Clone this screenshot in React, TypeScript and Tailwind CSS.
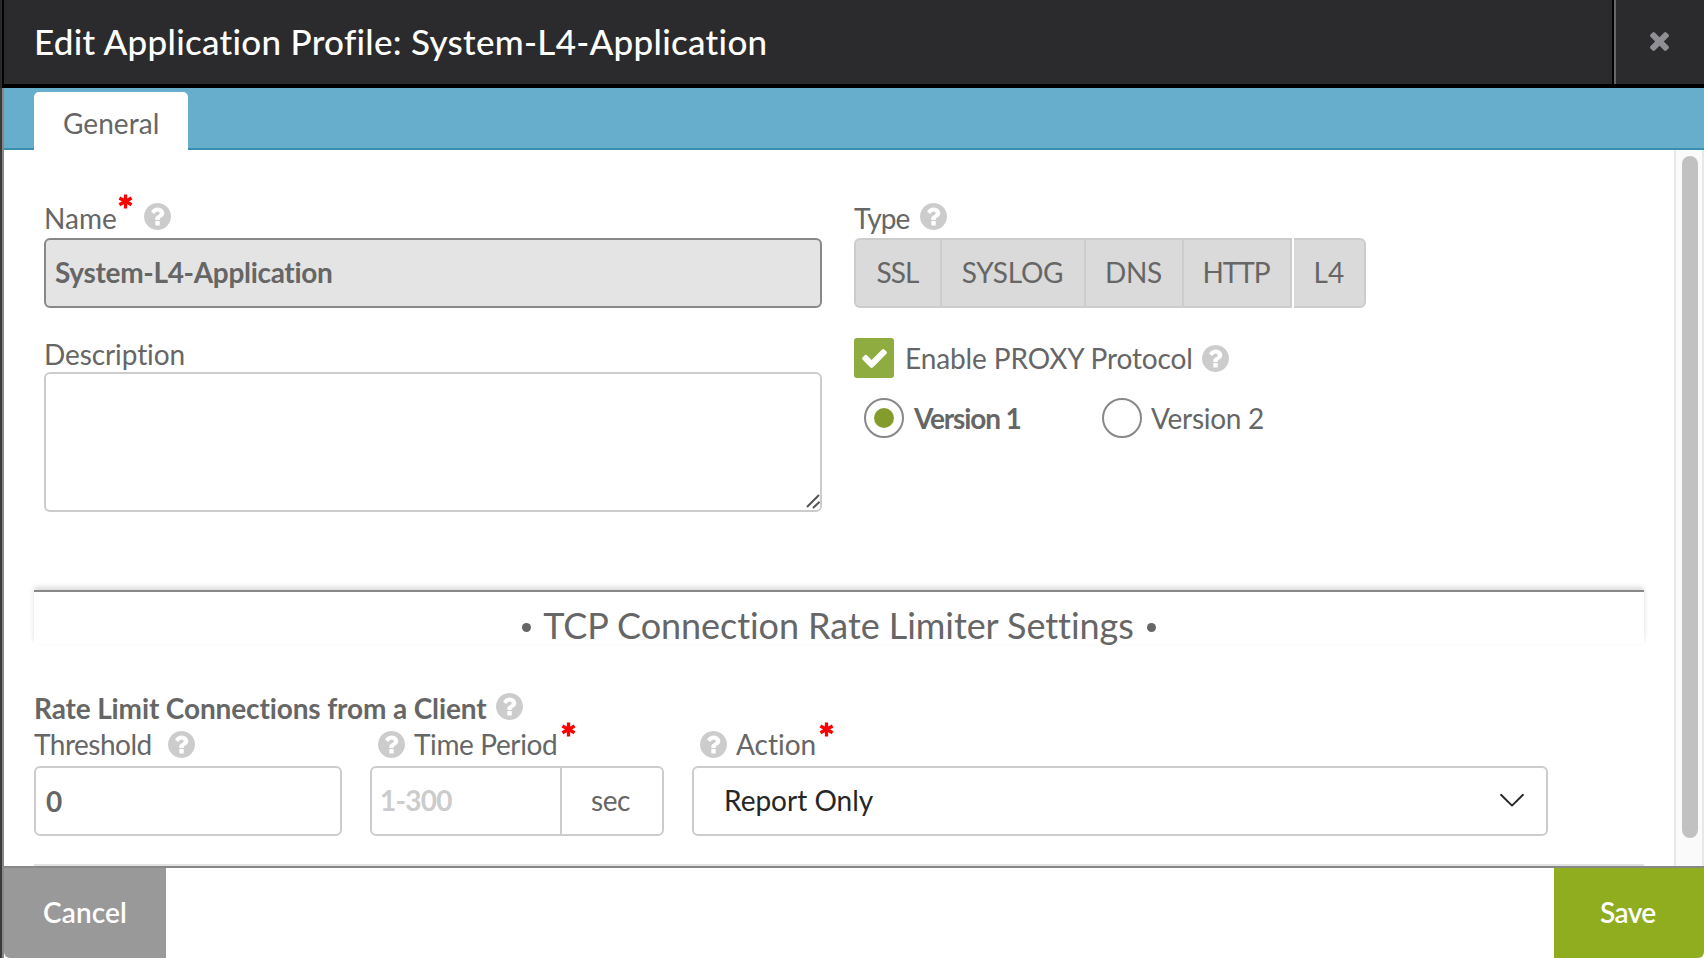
import React from 'react';

function HelpIcon({ className = '' }: { className?: string }) {
  return (
    <svg viewBox="0 0 1536 1536" className={`h-[27px] w-[27px] shrink-0 fill-[#cccccc] ${className}`} aria-hidden="true">
      <path d="M896 1248v-192q0-14-9-23t-23-9h-192q-14 0-23 9t-9 23v192q0 14 9 23t23 9h192q14 0 23-9t9-23zm256-672q0-88-55.5-163t-138.5-116-170-41q-243 0-371 213-15 24 8 42l132 100q7 6 19 6 16 0 25-12 53-68 86-92 34-24 86-24 48 0 85.5 26t37.5 59q0 38-20 61t-68 45q-63 28-115.5 86.5t-52.5 125.5v36q0 14 9 23t23 9h192q14 0 23-9t9-23q0-19 21.5-49.5t54.5-49.5q32-18 49-28.5t46-35 44.5-48 28-60.5 12.5-81zm384 192q0 209-103 385.5t-279.5 279.5-385.5 103-385.5-103-279.5-279.5-103-385.5 103-385.5 279.5-279.5 385.5-103 385.5 103 279.5 279.5 103 385.5z" />
    </svg>
  );
}

function Required({ className = '' }: { className?: string }) {
  return (
    <svg viewBox="0 0 15 15" className={`h-[15px] w-[15px] shrink-0 self-start stroke-[#ff0000] ${className}`} strokeWidth="3.3" fill="none" aria-hidden="true">
      <path d="M7.5 .4V14.4M1.4 4 13.6 10.8M13.6 4 1.4 10.8" />
    </svg>
  );
}

function TypeOption({ label, className }: { label: string; className: string }) {
  return (
    <button className={`flex h-[70px] items-center justify-center border-y-2 border-[#cccccc] bg-[#dadada] pb-[3px] ${className}`}>
      {label}
    </button>
  );
}

export default function App() {
  return (
    <div className="flex h-[958px] w-[1704px] overflow-hidden bg-[#3a3a3a] font-['Lato',sans-serif] text-[28px] leading-none whitespace-nowrap text-[#666666] [font-variant-ligatures:none]">
      <div className="flex w-[4px] shrink-0 flex-col">
        <div className="h-[88px] border-r-2 border-black bg-[#2a2a2a]" />
        <div className="flex-1 border-r-2 border-[#888888] bg-[#3a3a3a]" />
      </div>

      <div className="flex min-w-0 flex-1 flex-col bg-white">
        <header className="flex h-[88px] shrink-0 border-b-4 border-black bg-[#2b2b2d]">
          <h1 className="flex flex-1 items-center pb-[2px] pl-[30px] text-[35px] font-medium tracking-[0.29px] text-white">
            Edit Application Profile: System-L4-Application
          </h1>
          <div className="w-[2px] bg-black" />
          <button className="flex w-[90px] items-center border-l-2 border-[#666666] pb-[1px] pl-[34px]">
            <svg viewBox="302 366 1188 1188" className="h-[19px] w-[19px] fill-[#8f8f94]" aria-label="Close">
              <path d="M1490 1322q0 40-28 68l-136 136q-28 28-68 28t-68-28l-294-294-294 294q-28 28-68 28t-68-28l-136-136q-28-28-28-68t28-68l294-294-294-294q-28-28-28-68t28-68l136-136q28-28 68-28t68 28l294 294 294-294q28-28 68-28t68 28l136 136q28 28 28 68t-28 68l-294 294 294 294q28 28 28 68z" />
            </svg>
          </button>
        </header>

        <nav className="flex h-[62px] shrink-0 bg-[#66aecb] pt-[4px]">
          <div className="w-[30px] border-b-2 border-[#3a8fb0]" />
          <div className="flex w-[154px] items-center rounded-t-[5px] bg-white pt-[4px] pl-[29px] tracking-[0.05px]">General</div>
          <div className="flex-1 border-b-2 border-[#3a8fb0]" />
        </nav>

        <div className="flex min-h-0 flex-1">
          <main className="flex w-[1670px] flex-col overflow-hidden pl-[30px]">
            <div className="flex pt-[46px] pl-[10px]">
              <section className="w-[778px]">
                <div className="flex h-[42px] items-center">
                  <span className="w-[74px] pt-[1px] tracking-[0.03px]">Name</span>
                  <Required className="-mt-[2px]" />
                  <HelpIcon className="ml-[11px] -mt-[1px]" />
                </div>
                <div className="flex h-[70px] items-center rounded-[6px] border-2 border-[#888888] bg-[#e4e4e4] pb-[3px] pl-[9px] font-bold tracking-[-0.31px]">
                  System-L4-Application
                </div>
                <div className="mt-[26px] flex h-[38px] items-center">
                  <span className="pt-[1px] tracking-[-0.09px]">Description</span>
                </div>
                <div className="flex h-[140px] items-end justify-end rounded-[6px] border-2 border-[#cccccc]">
                  <svg viewBox="0 0 16 16" className="h-4 w-4 stroke-[#555555]" strokeWidth="2" fill="none">
                    <path d="M3 13 15 1M9 14 15.6 7.8" />
                  </svg>
                </div>
              </section>

              <section className="ml-[32px]">
                <div className="flex h-[42px] items-center">
                  <span className="w-[66px] pt-[1px] tracking-[-0.95px]">Type</span>
                  <HelpIcon className="-mt-[1px]" />
                </div>
                <div className="flex">
                  <TypeOption label="SSL" className="w-[86px] rounded-l-[6px] border-l-2 pr-[1px] tracking-[-1px]" />
                  <TypeOption label="SYSLOG" className="w-[144px] border-l-2 pr-[1px] tracking-[-0.24px]" />
                  <TypeOption label="DNS" className="w-[98px] border-l-2 pr-[1px] tracking-[-0.34px]" />
                  <TypeOption label="HTTP" className="w-[110px] border-x-2 pr-[2px] tracking-[-1.1px]" />
                  <TypeOption label="L4" className="ml-[2px] w-[72px] rounded-r-[6px] border-r-2 tracking-[0.1px]" />
                </div>
                <div className="mt-[30px] flex h-[40px] items-center">
                  <div className="flex h-[40px] w-[40px] items-center justify-center rounded-[3px] bg-[#8eac40]">
                    <svg viewBox="121 334 1550 1188" className="h-[19px] w-[25px] fill-white" aria-hidden="true">
                      <path d="M1671 566q0 40-28 68l-724 724-136 136q-28 28-68 28t-68-28l-136-136-362-362q-28-28-28-68t28-68l136-136q28-28 68-28t68 28l294 295 656-657q28-28 68-28t68 28l136 136q28 28 28 68z" />
                    </svg>
                  </div>
                  <span className="ml-[11px] w-[297px] pb-[1px] tracking-[-0.12px]">Enable PROXY Protocol</span>
                  <HelpIcon />
                </div>
                <div className="mt-[20px] flex h-[40px] items-center pl-[10px]">
                  <div className="flex h-[40px] w-[40px] items-center justify-center rounded-full border-2 border-[#888888]">
                    <div className="h-[20px] w-[20px] rounded-full bg-[#839c2b]" />
                  </div>
                  <span className="ml-[10px] w-[188px] pb-[1px] font-bold tracking-[-1.15px]">Version 1</span>
                  <div className="h-[40px] w-[40px] rounded-full border-2 border-[#888888]" />
                  <span className="ml-[9px] pb-[1px] tracking-[-0.28px]">Version 2</span>
                </div>
              </section>
            </div>

            <div className="mt-[78px] h-[54px] w-[1610px] shrink-0 border-t-2 border-[#888888] bg-white shadow-[0_-3px_5px_rgba(0,0,0,0.14)]">
              <h2 className="flex h-[66px] items-center justify-center text-[36px] tracking-[-0.06px]">
                <span className="mt-[5px] mr-[12px] h-[9px] w-[9px] rounded-full bg-[#666666]" />
                <span>TCP Connection Rate Limiter Settings</span>
                <span className="mt-[5px] ml-[13px] h-[9px] w-[9px] rounded-full bg-[#666666]" />
              </h2>
            </div>

            <div className="mt-[48px] flex h-[30px] shrink-0 items-center">
              <span className="w-[462px] pt-[1px] font-bold tracking-[-0.13px]">Rate Limit Connections from a Client</span>
              <HelpIcon className="-mt-[1px]" />
            </div>
            <div className="flex h-[44px] shrink-0 items-center">
              <span className="w-[134px] pb-[1px] tracking-[-0.5px]">Threshold</span>
              <HelpIcon />
              <HelpIcon className="ml-[183px]" />
              <span className="ml-[9px] w-[147px] pb-[1px] tracking-[-0.38px]">Time Period</span>
              <Required />
              <HelpIcon className="ml-[124px]" />
              <span className="ml-[9px] w-[83px] pb-[1px]">Action</span>
              <Required />
            </div>
            <div className="flex shrink-0">
              <div className="flex h-[70px] w-[308px] items-center rounded-[6px] border-2 border-[#cccccc] pl-[10px] font-bold">0</div>
              <div className="ml-[28px] flex h-[70px] w-[294px] rounded-[6px] border-2 border-[#cccccc]">
                <div className="flex w-[188px] items-center pb-[3px] pl-[8px] font-bold tracking-[-0.75px] text-[#cccccc]">1-300</div>
                <div className="flex flex-1 items-center border-l-2 border-[#cccccc] pb-[3px] pl-[29px] tracking-[-0.4px]">sec</div>
              </div>
              <div className="ml-[28px] flex h-[70px] w-[856px] items-center justify-between rounded-[6px] border-2 border-[#cccccc] pb-[3px] pl-[30px] text-[#262626]">
                <span>Report Only</span>
                <svg viewBox="0 0 26 15" className="mt-[1px] mr-[21px] h-[15px] w-[26px] stroke-[#262626]" strokeWidth="1.9" strokeLinecap="round" strokeLinejoin="round" fill="none">
                  <path d="M2 1.8 13 12.6 24 1.8" />
                </svg>
              </div>
            </div>
            <div className="mt-[28px] h-[2px] w-[1610px] shrink-0 bg-[#e2e2e2]" />
          </main>

          <div className="flex w-[30px] justify-center border-x-2 border-[#e8e8e8] bg-[#fafafa] pt-[6px] pl-[2px]">
            <div className="h-[682px] w-[16px] rounded-full bg-[#c1c1c1]" />
          </div>
        </div>

        <footer className="flex h-[92px] shrink-0 justify-between border-t-2 border-[#888888]">
          <button className="flex w-[162px] items-center rounded-bl-[6px] bg-[#999999] pb-[2px] pl-[39px] font-semibold tracking-[0.1px] text-white">Cancel</button>
          <button className="flex w-[150px] items-center rounded-br-[6px] bg-[#8fad1f] pb-[2px] pl-[46px] font-semibold tracking-[-0.6px] text-white">Save</button>
        </footer>
      </div>
    </div>
  );
}
